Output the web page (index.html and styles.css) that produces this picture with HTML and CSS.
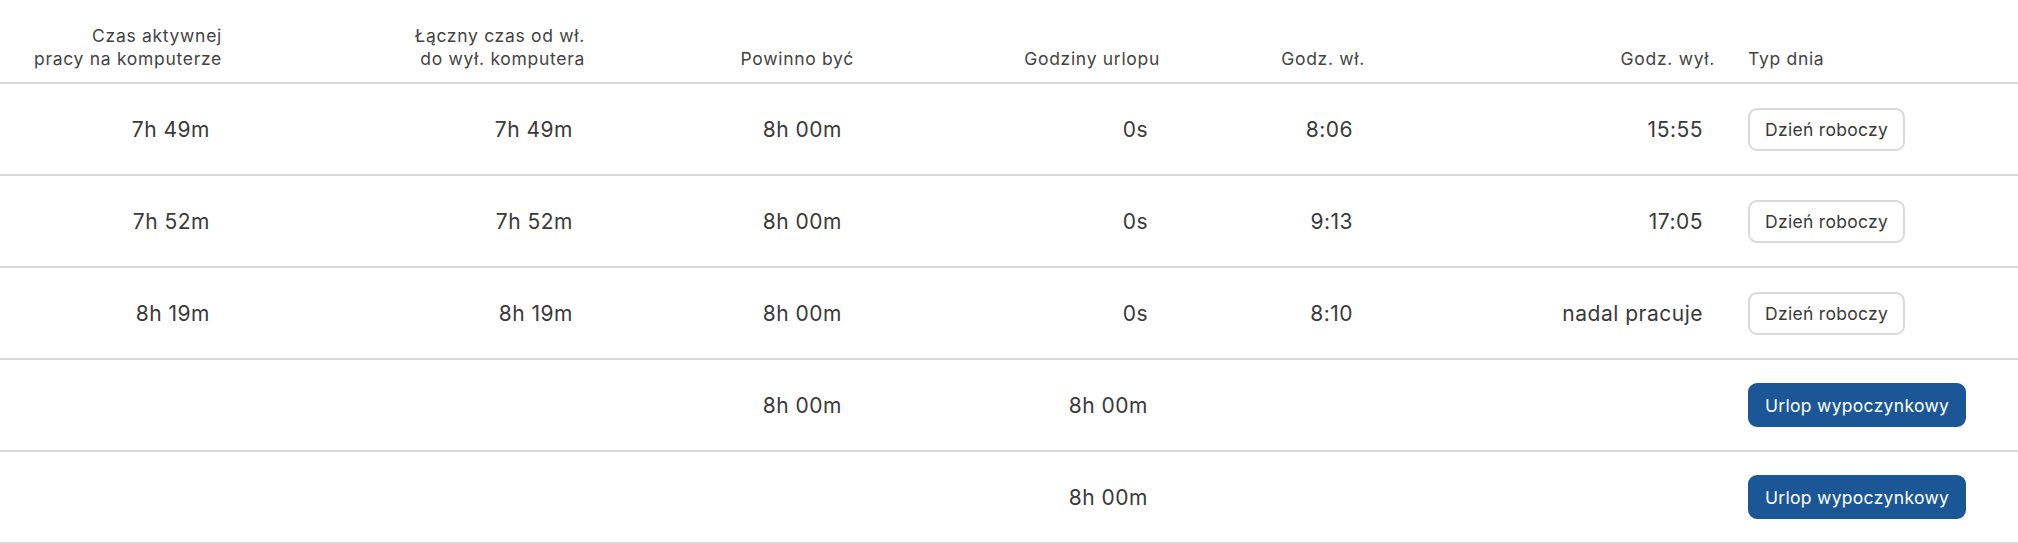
FILE: index.html
```html
<!DOCTYPE html>
<html lang="pl">
<head>
<meta charset="utf-8">
<link rel="stylesheet" href="styles.css">
</head>
<body>
<div class="table">
  <div class="row head">
    <div class="cell">Czas aktywnej<br>pracy na komputerze</div>
    <div class="cell">Łączny czas od wł.<br>do wył. komputera</div>
    <div class="cell">Powinno być</div>
    <div class="cell">Godziny urlopu</div>
    <div class="cell">Godz. wł.</div>
    <div class="cell">Godz. wył.</div>
    <div class="cell type">Typ dnia</div>
  </div>
  <div class="row">
    <div class="cell">7h 49m</div>
    <div class="cell">7h 49m</div>
    <div class="cell">8h 00m</div>
    <div class="cell">0s</div>
    <div class="cell">8:06</div>
    <div class="cell">15:55</div>
    <div class="cell type"><span class="badge">Dzień roboczy</span></div>
  </div>
  <div class="row">
    <div class="cell">7h 52m</div>
    <div class="cell">7h 52m</div>
    <div class="cell">8h 00m</div>
    <div class="cell">0s</div>
    <div class="cell">9:13</div>
    <div class="cell">17:05</div>
    <div class="cell type"><span class="badge">Dzień roboczy</span></div>
  </div>
  <div class="row">
    <div class="cell">8h 19m</div>
    <div class="cell">8h 19m</div>
    <div class="cell">8h 00m</div>
    <div class="cell">0s</div>
    <div class="cell">8:10</div>
    <div class="cell">nadal pracuje</div>
    <div class="cell type"><span class="badge">Dzień roboczy</span></div>
  </div>
  <div class="row">
    <div class="cell"></div>
    <div class="cell"></div>
    <div class="cell">8h 00m</div>
    <div class="cell">8h 00m</div>
    <div class="cell"></div>
    <div class="cell"></div>
    <div class="cell type"><span class="badge leave">Urlop wypoczynkowy</span></div>
  </div>
  <div class="row">
    <div class="cell"></div>
    <div class="cell"></div>
    <div class="cell"></div>
    <div class="cell">8h 00m</div>
    <div class="cell"></div>
    <div class="cell"></div>
    <div class="cell type"><span class="badge leave">Urlop wypoczynkowy</span></div>
  </div>
</div>
</body>
</html>
```
FILE: styles.css
```css
* { box-sizing: border-box; }
html, body { margin: 0; padding: 0; background: #fff; }
body {
  font-family: Inter, "Noto Sans", sans-serif;
  color: #3a3a3a;
}
.table { width: 2018px; }
.row {
  display: grid;
  grid-template-columns: 220px 363px 269px 306px 205px 350px 1fr;
  height: 92px;
  border-bottom: 2px solid #d9d9d9;
  align-items: center;
}
.row .cell {
  text-align: right;
  padding-right: 10px;
  font-size: 21px;
  letter-spacing: 0.5px;
  color: #3a3a3a;
}
.row.head {
  height: 84px;
  align-items: end;
  padding-bottom: 12px;
}
.row.head .cell {
  font-size: 17.5px;
  letter-spacing: 0.7px;
  line-height: 23px;
  padding-right: 0;
  margin-right: -2px;
  color: #444;
}
.row .cell.type {
  text-align: left;
  padding: 0 0 0 35px;
}
.row.head .cell.type {
  padding-left: 35px;
  margin-right: 0;
}
.badge {
  display: inline-flex;
  align-items: center;
  height: 43px;
  padding: 0 15px;
  border: 2px solid #d9d9d9;
  border-radius: 9px;
  font-size: 17.5px;
  letter-spacing: 0.3px;
  color: #3a3a3a;
}
.badge.leave {
  height: 44px;
  border-color: #1b5797;
  background: #1b5797;
  color: #fff;
}
```
